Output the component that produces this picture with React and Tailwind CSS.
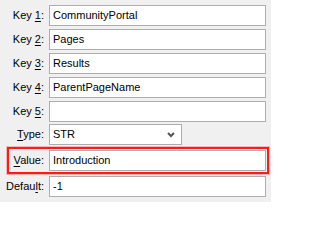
import React from "react";

function Field({ children, className = "" }) {
  return (
    <div className={"ml-[5px] w-[217px] h-[21px] border border-[#adadad] bg-white pl-[3px] flex items-center " + className}>
      {children}
    </div>
  );
}

function Row({ label, value }) {
  return (
    <div className="flex items-center h-[21px]">
      <div className="w-[44px] text-right whitespace-nowrap">{label}</div>
      <Field>{value}</Field>
    </div>
  );
}

const U = ({ children }) => <span className="underline underline-offset-[2px]">{children}</span>;

export default function App() {
  return (
    <div
      className="w-[271px] h-[202px] bg-[#f0f0f0] pt-[5px] flex flex-col text-[11px] text-black leading-none"
      style={{ fontFamily: '"Liberation Sans", Arial, sans-serif' }}
    >
      <div className="flex flex-col gap-[3px]">
        <Row label={<>Key <U>1</U>:</>} value="CommunityPortal" />
        <Row label={<>Key <U>2</U>:</>} value="Pages" />
        <Row label={<>Key <U>3</U>:</>} value="Results" />
        <Row label={<>Key <U>4</U>:</>} value="ParentPageName" />
        <Row label={<>Key <U>5</U>:</>} value="" />
      </div>
      <div className="flex items-center h-[21px] mt-[2px]">
        <div className="w-[44px] text-right whitespace-nowrap"><U>T</U>ype:</div>
        <div className="ml-[5px] w-[133px] h-[21px] border border-[#adadad] bg-white pl-[3px] pr-[6px] flex items-center justify-between">
          <span>STR</span>
          <svg width="8" height="6" viewBox="0 0 8 6">
            <path d="M1 1 L4 4 L7 1" fill="none" stroke="#555" strokeWidth="2" />
          </svg>
        </div>
      </div>
      <div className="ml-[7px] mt-[2px] w-[262px] border-2 border-[#ff1a1a] py-[1px] flex items-center shadow-[0_0_0_1px_#ffb3b3]">
        <div className="w-[35px] text-right whitespace-nowrap"><U>V</U>alue:</div>
        <Field>Introduction</Field>
      </div>
      <div className="mt-[2px]">
        <Row label={<>Defau<U>l</U>t:</>} value="-1" />
      </div>
    </div>
  );
}
